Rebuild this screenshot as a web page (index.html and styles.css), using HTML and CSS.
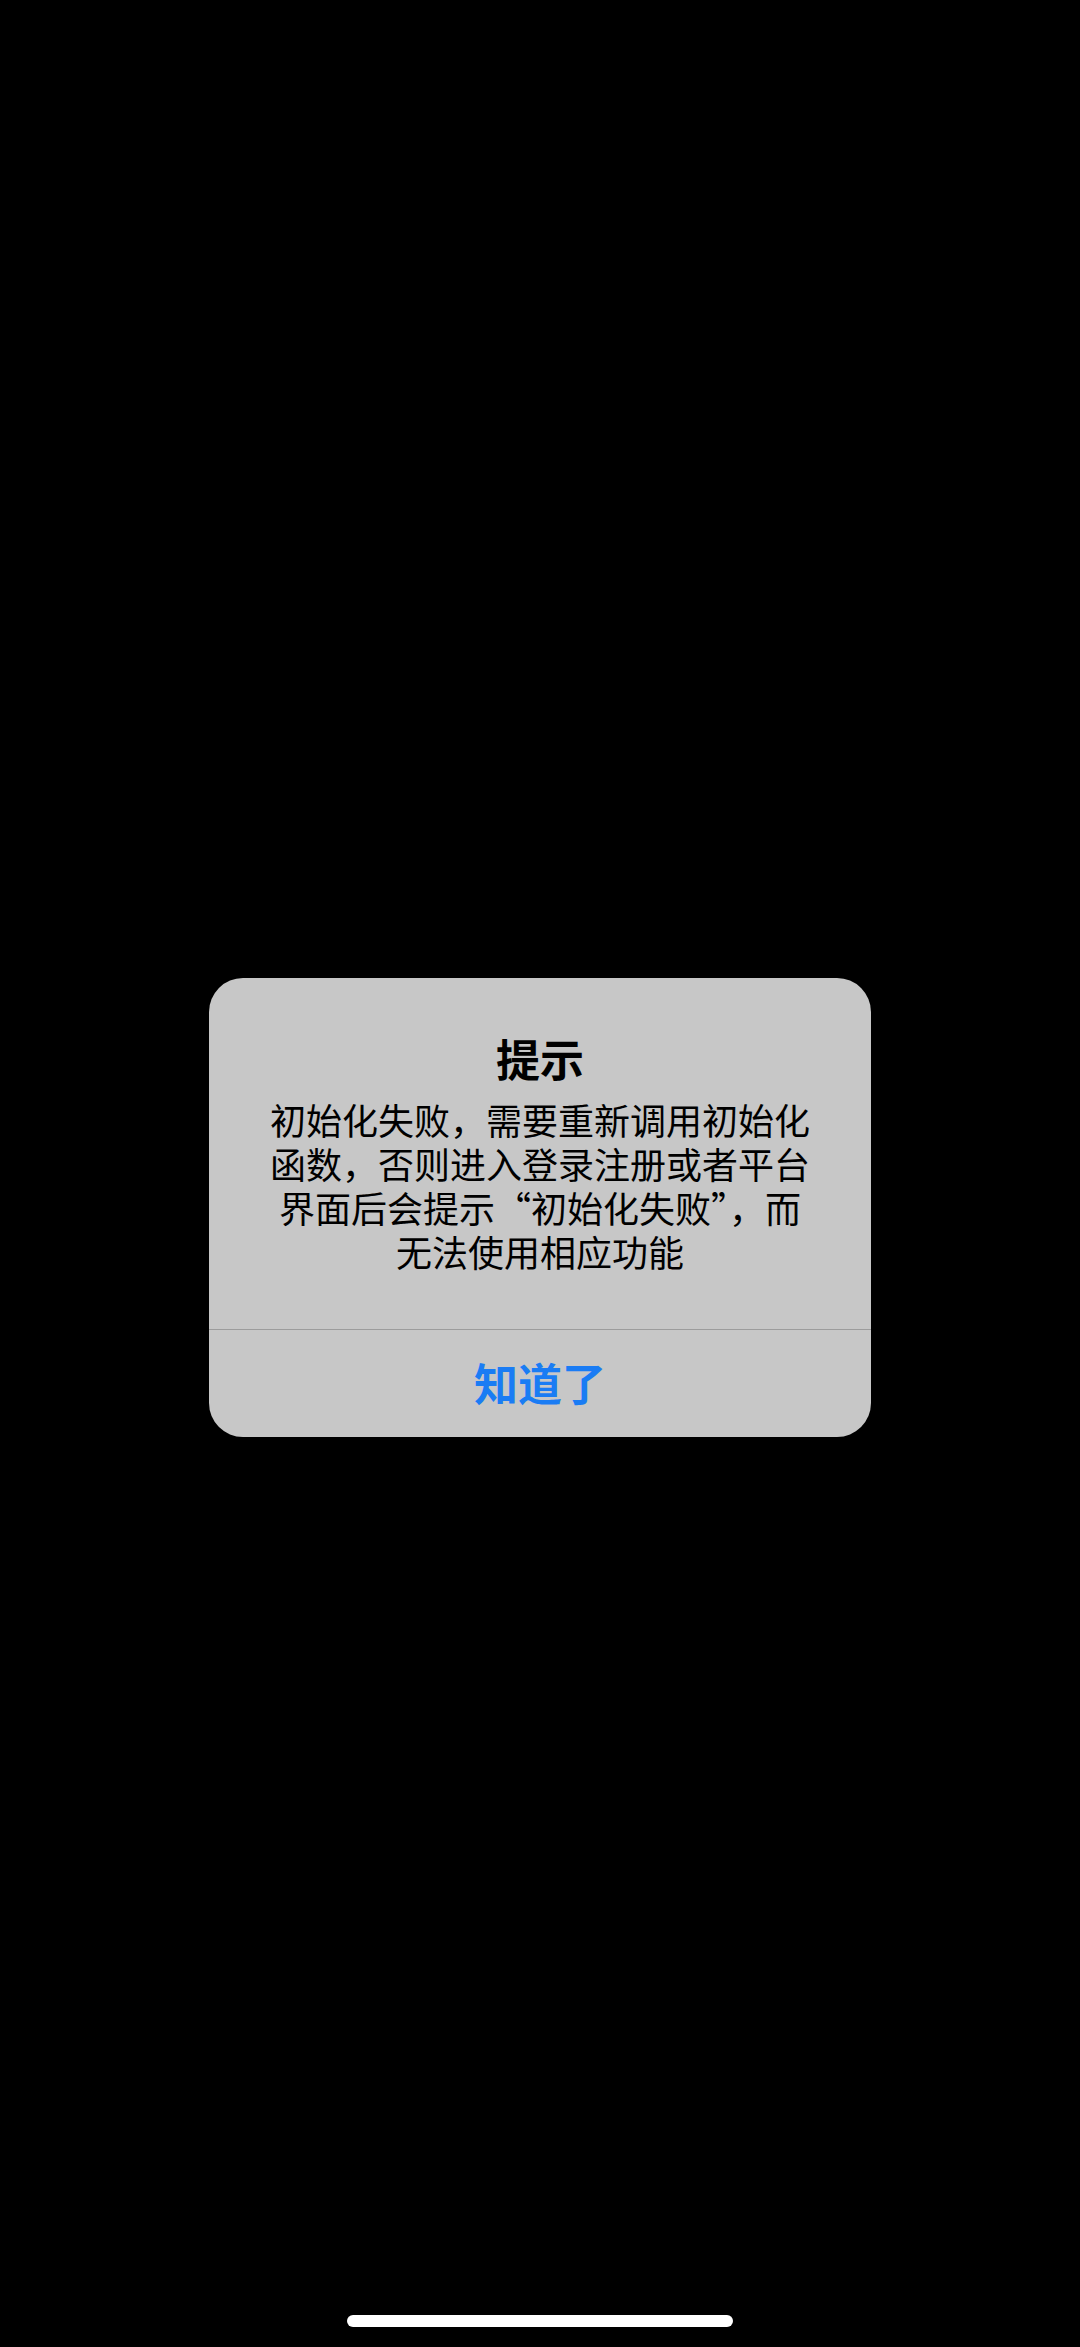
FILE: index.html
```html
<!DOCTYPE html>
<html lang="zh-CN">
<head>
    <meta charset="utf-8">
    <title>提示</title>
    <link rel="stylesheet" href="styles.css">
</head>
<body>
    <div class="screen">
        <div class="alert">
            <div class="alert-content">
                <h2 class="alert-title">提示</h2>
                <p class="alert-message">初始化失败，需要重新调用初始化<br>函数，否则进入登录注册或者平台<br>界面后会提示“初始化失败”，而<br>无法使用相应功能</p>
            </div>
            <button class="alert-button">知道了</button>
        </div>
        <div class="home-indicator"></div>
    </div>
</body>
</html>
```

FILE: styles.css
```css
html, body {
    margin: 0;
    padding: 0;
    background-color: #000;
}

body {
    font-family: "Noto Sans CJK SC", "Noto Sans", sans-serif;
}

.screen {
    width: 1080px;
    height: 2347px;
    display: flex;
    flex-direction: column;
    align-items: center;
}

.alert {
    margin-top: 978px;
    width: 662px;
    background-color: #c7c7c7;
    border-radius: 34px;
    overflow: hidden;
}

.alert-content {
    padding: 54px 40px 56px;
    text-align: center;
}

.alert-title {
    margin: 0;
    font-size: 44px;
    line-height: 52px;
    font-weight: 700;
    color: #000;
}

.alert-message {
    margin: 13px 0 0;
    font-size: 36px;
    line-height: 44px;
    color: #000;
}

.alert-button {
    display: block;
    width: 100%;
    height: 108px;
    border: none;
    border-top: 1px solid #9c9c9c;
    background: none;
    font-family: inherit;
    font-size: 44px;
    font-weight: 700;
    color: #1a7cf4;
    padding: 0 0 4px;
    cursor: pointer;
}

.home-indicator {
    margin-top: auto;
    margin-bottom: 20px;
    width: 386px;
    height: 12px;
    border-radius: 6px;
    background-color: #fff;
}
```
